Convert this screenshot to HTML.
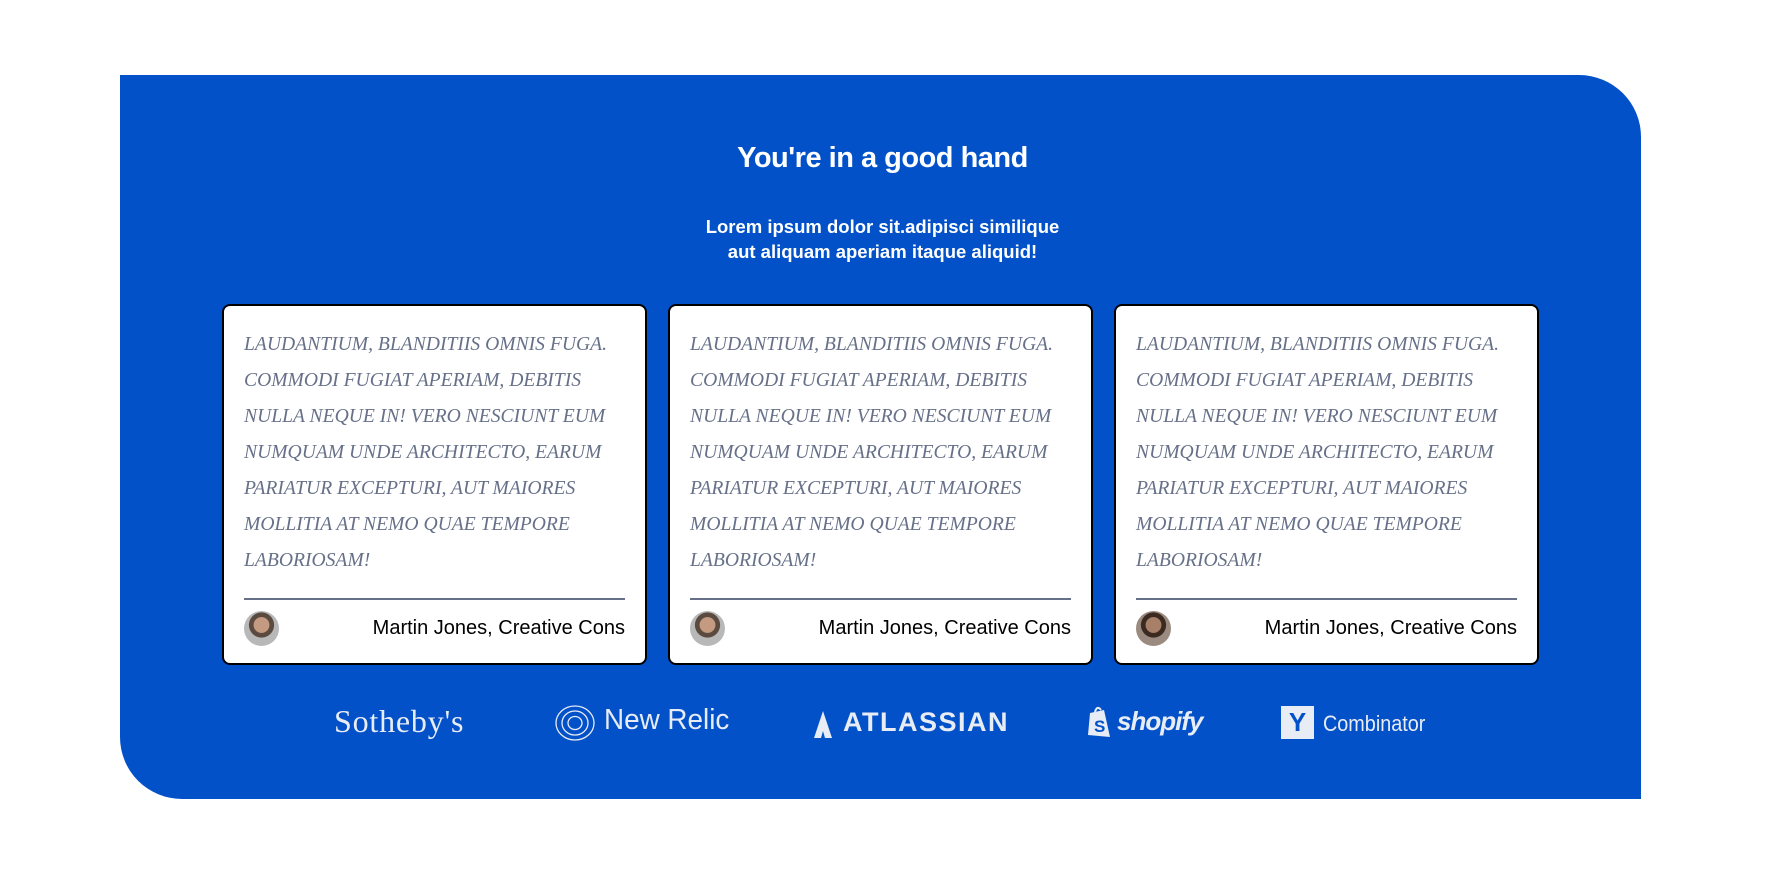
<!DOCTYPE html>
<html><head><meta charset="utf-8"><style>
*{margin:0;padding:0;box-sizing:border-box}
body{width:1765px;height:881px;background:#fff;position:relative;overflow:hidden;font-family:"Liberation Sans",sans-serif}
.sec{position:absolute;left:120px;top:75px;width:1521px;height:724px;background:#0251c9;border-radius:0 62px 0 62px}
h1{position:absolute;left:0;width:100%;top:142px;text-align:center;color:#fff;font-size:29px;font-weight:bold;letter-spacing:-0.5px}
.sub{position:absolute;left:0;width:100%;top:214px;text-align:center;color:#fff;font-size:18.5px;font-weight:bold;line-height:25px}
.card{position:absolute;top:304px;width:425px;height:361px;background:#fff;border:2px solid #000;border-radius:8px;padding:21px 18px 0 20px}
.card p{font-family:"Liberation Serif",serif;font-style:italic;text-transform:uppercase;color:#667088;font-size:19.6px;line-height:36px;letter-spacing:0}
.hr{position:absolute;left:20px;right:20px;top:292px;height:2px;background:#667088}
.av{position:absolute;left:20px;top:305px;width:35px;height:35px;border-radius:50%;background:radial-gradient(circle at 50% 40%,#c49a80 0 28%,#5a4a40 30% 45%,#b8b8b8 47%)}
.nm{position:absolute;right:20px;top:311px;font-size:20px;color:#000}
.logo{position:absolute;color:#e8ecf4;top:700px}
</style></head><body>
<div class="sec"></div>
<h1>You're in a good hand</h1>
<div class="sub">Lorem ipsum dolor sit.adipisci similique<br>aut aliquam aperiam itaque aliquid!</div>

<div class="card" style="left:222px"><p>Laudantium, blanditiis omnis fuga. Commodi fugiat aperiam, debitis nulla neque in! Vero nesciunt eum numquam unde architecto, earum pariatur excepturi, aut maiores mollitia at nemo quae tempore laboriosam!</p><div class="hr"></div><div class="av"></div><div class="nm">Martin Jones, Creative Cons</div></div>
<div class="card" style="left:668px"><p>Laudantium, blanditiis omnis fuga. Commodi fugiat aperiam, debitis nulla neque in! Vero nesciunt eum numquam unde architecto, earum pariatur excepturi, aut maiores mollitia at nemo quae tempore laboriosam!</p><div class="hr"></div><div class="av"></div><div class="nm">Martin Jones, Creative Cons</div></div>
<div class="card" style="left:1114px"><p>Laudantium, blanditiis omnis fuga. Commodi fugiat aperiam, debitis nulla neque in! Vero nesciunt eum numquam unde architecto, earum pariatur excepturi, aut maiores mollitia at nemo quae tempore laboriosam!</p><div class="hr"></div><div class="av" style="background:radial-gradient(circle at 50% 40%,#a8806a 0 28%,#3a2a20 30% 45%,#9a8a80 47%)"></div><div class="nm">Martin Jones, Creative Cons</div></div>

<div class="logo" style="left:334px;top:703px;font-family:'Liberation Serif',serif;font-size:32px;letter-spacing:0.8px">Sotheby's</div>
<svg class="logo" style="left:554px;top:704px" width="42" height="38" viewBox="0 0 42 38" fill="none" stroke="#e8ecf4" stroke-width="1.3"><ellipse cx="21" cy="19" rx="19" ry="17"/><ellipse cx="21" cy="19" rx="13" ry="12"/><ellipse cx="21" cy="19" rx="7" ry="6.5"/></svg>
<div class="logo" style="left:604px;top:704px;font-size:29px;transform:scaleX(0.96);transform-origin:left">New Relic</div>
<svg class="logo" style="left:809px;top:711px" width="28" height="27" viewBox="0 0 28 27"><path d="M14 0 L5 27 H12 L14 20 L16 27 H23 Z" fill="#e8ecf4"/></svg>
<div class="logo" style="left:843px;top:707px;font-size:27px;font-weight:bold;letter-spacing:1.5px">ATLASSIAN</div>
<svg class="logo" style="left:1087px;top:705px" width="26" height="34" viewBox="0 0 26 34"><path d="M3 8 L17 5 L23 32 L1 30 Z" fill="#e8ecf4"/><path d="M8 7 Q10 0 14 5" stroke="#e8ecf4" fill="none" stroke-width="2"/><text x="7" y="27" font-family="Liberation Sans" font-weight="bold" font-size="17" fill="#0251c9">S</text></svg>
<div class="logo" style="left:1117px;top:706px;font-size:26px;font-weight:bold;font-style:italic;letter-spacing:-1px">shopify</div>
<div class="logo" style="left:1281px;top:706px;width:33px;height:33px;background:#e8ecf4;color:#0251c9;font-weight:bold;font-size:26px;text-align:center;line-height:33px">Y</div>
<div class="logo" style="left:1323px;top:711px;font-size:22px;transform:scaleX(0.9);transform-origin:left">Combinator</div>
</body></html>
